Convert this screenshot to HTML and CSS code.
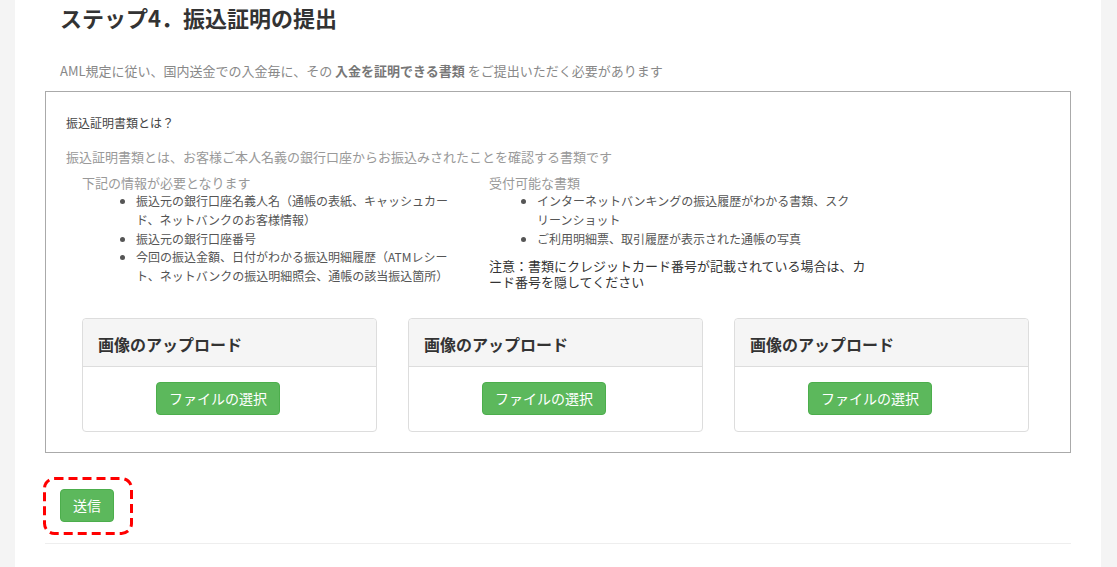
FILE: index.html
```html
<!DOCTYPE html>
<html lang="ja">
<head>
<meta charset="utf-8">
<title>ステップ4．振込証明の提出</title>
<link rel="stylesheet" href="styles.css">
</head>
<body>
<div class="page">
  <h2 class="title">ステップ4．振込証明の提出</h2>
  <p class="lead">AML規定に従い、国内送金での入金毎に、その <b>入金を証明できる書類</b> をご提出いただく必要があります</p>
  <div class="box">
    <p class="q">振込証明書類とは？</p>
    <p class="desc">振込証明書類とは、お客様ご本人名義の銀行口座からお振込みされたことを確認する書類です</p>
    <div class="cols">
      <div class="col col-left">
        <p class="col-head">下記の情報が必要となります</p>
        <ul class="list list-left">
          <li>振込元の銀行口座名義人名（通帳の表紙、キャッシュカード、ネットバンクのお客様情報）</li>
          <li>振込元の銀行口座番号</li>
          <li>今回の振込金額、日付がわかる振込明細履歴（ATMレシート、ネットバンクの振込明細照会、通帳の該当振込箇所）</li>
        </ul>
      </div>
      <div class="col col-right">
        <p class="col-head">受付可能な書類</p>
        <ul class="list list-right">
          <li>インターネットバンキングの振込履歴がわかる書類、スクリーンショット</li>
          <li>ご利用明細票、取引履歴が表示された通帳の写真</li>
        </ul>
        <p class="note">注意：書類にクレジットカード番号が記載されている場合は、カード番号を隠してください</p>
      </div>
    </div>
    <div class="cards">
      <div class="card">
        <div class="card-head">画像のアップロード</div>
        <div class="card-body"><button class="btn">ファイルの選択</button></div>
      </div>
      <div class="card">
        <div class="card-head">画像のアップロード</div>
        <div class="card-body"><button class="btn">ファイルの選択</button></div>
      </div>
      <div class="card">
        <div class="card-head">画像のアップロード</div>
        <div class="card-body"><button class="btn">ファイルの選択</button></div>
      </div>
    </div>
  </div>
  <div class="submit-row">
    <span class="mark">
      <button class="btn">送信</button>
      <svg class="mark-ring" width="90" height="58" viewBox="0 0 90 58" aria-hidden="true">
        <rect x="1.5" y="1.5" width="87" height="55" rx="10" ry="10" fill="none" stroke="#ff0000" stroke-width="3" stroke-dasharray="9 5"/>
      </svg>
    </span>
  </div>
  <hr class="rule">
</div>
</body>
</html>
```

FILE: styles.css
```css
* { box-sizing: border-box; }
html, body { margin: 0; padding: 0; }
body {
  background: #f4f4f4;
  font-family: "Noto Sans CJK JP", "Noto Sans", sans-serif;
  color: #333;
  height: 567px;
  overflow: hidden;
}
.page {
  margin: 0 16px 0 15px;
  background: #fff;
  min-height: 567px;
  padding: 2px 30px 0 30px;
}
.title {
  margin: 0;
  padding-left: 15px;
  font-size: 22px;
  line-height: 30px;
  font-weight: bold;
  color: #333;
}
.lead {
  margin: 30px 0 0 0;
  padding-left: 15px;
  font-size: 13px;
  line-height: 18px;
  color: #888;
}
.lead b { color: #777; font-weight: bold; }
.box {
  margin-top: 11px;
  border: 1px solid #aaa;
  padding: 22px 20px 20px 20px;
}
.q {
  margin: 0;
  font-size: 12px;
  line-height: 18px;
  color: #444;
}
.desc {
  margin: 16px 0 0 0;
  font-size: 13px;
  line-height: 18px;
  color: #999;
}
.cols {
  display: flex;
  margin-top: 8px;
}
.col-left { width: 423px; padding-left: 16px; }
.col-right { width: 390px; }
.col-head {
  margin: 0;
  font-size: 13px;
  line-height: 18px;
  color: #999;
}
.list {
  margin: 0;
  font-size: 12px;
  line-height: 18.75px;
  color: #555;
}
.list-left { padding-left: 54px; width: 372px; }
.list-right { padding-left: 48px; width: 366px; }
.note {
  margin: 10px 0 0 0;
  font-size: 13px;
  line-height: 16px;
  color: #333;
  width: 385px;
}
.cards {
  display: grid;
  grid-template-columns: 295px 295px 295px;
  column-gap: 31px;
  margin-top: 28px;
  padding-left: 16px;
}
.card {
  border: 1px solid #ddd;
  border-radius: 4px;
  background: #fff;
}
.card-head {
  background: #f5f5f5;
  border-bottom: 1px solid #ddd;
  border-radius: 4px 4px 0 0;
  height: 48px;
  padding: 0 15px;
  font-size: 16px;
  font-weight: bold;
  line-height: 50px;
  color: #333;
}
.card-body {
  display: flex;
  justify-content: flex-start;
  padding: 15px 0 16px 73px;
}
.btn {
  font-family: "Noto Sans CJK JP", "Noto Sans", sans-serif;
  background: #5cb85c;
  border: 1px solid #4cae4c;
  border-radius: 4px;
  color: #fff;
  font-size: 14px;
  line-height: 19px;
  height: 33px;
  padding: 6px 12px;
  margin: 0;
  display: block;
}
.submit-row {
  padding: 36px 0 0 15px;
  display: flex;
}
.mark { position: relative; display: block; }
.mark-ring {
  position: absolute;
  left: -17px;
  top: -12px;
  pointer-events: none;
}
.rule {
  margin: 21px 0 0 0;
  border: 0;
  border-top: 1px solid #eee;
}
```
